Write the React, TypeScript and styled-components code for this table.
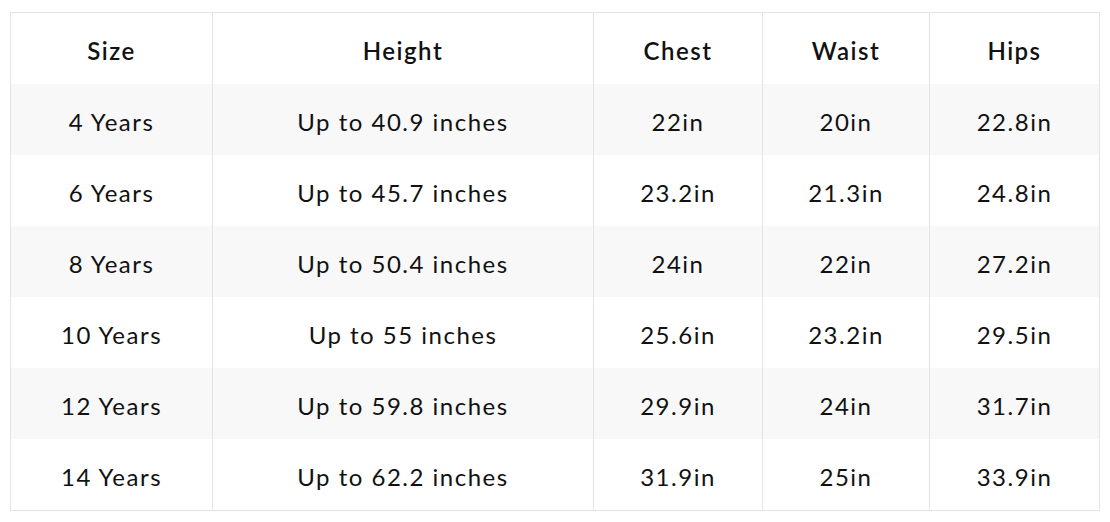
import React from "react";
import styled, { createGlobalStyle } from "styled-components";

const Global = createGlobalStyle`
  html, body { margin: 0; padding: 0; background: #ffffff; }
  body { font-family: "Lato", "Noto Sans", sans-serif; color: #111; }
`;

const Page = styled.div`
  padding: 12px 11px 12px 10px;
`;

const Table = styled.table`
  width: 1089px;
  border-collapse: collapse;
  border: 1px solid #e4e4e4;
  table-layout: fixed;
`;

const Th = styled.th`
  height: 68px;
  padding: 3px 0 0;
  font-size: 24px;
  font-weight: 600;
  letter-spacing: 1.5px;
  text-align: center;
  border-left: 1px solid #e4e4e4;
  color: #111;
`;

const Row = styled.tr<{ $shaded: boolean }>`
  background: ${(p) => (p.$shaded ? "#f8f8f8" : "#ffffff")};
`;

const Td = styled.td`
  height: 68px;
  padding: 3px 0 0;
  font-size: 24px;
  font-weight: 400;
  letter-spacing: 1.5px;
  text-align: center;
  border-left: 1px solid #e4e4e4;
  color: #111;
`;

const widths = [202, 381, 169, 167, 170];
const headers = ["Size", "Height", "Chest", "Waist", "Hips"];
const rows = [
  ["4 Years", "Up to 40.9 inches", "22in", "20in", "22.8in"],
  ["6 Years", "Up to 45.7 inches", "23.2in", "21.3in", "24.8in"],
  ["8 Years", "Up to 50.4 inches", "24in", "22in", "27.2in"],
  ["10 Years", "Up to 55 inches", "25.6in", "23.2in", "29.5in"],
  ["12 Years", "Up to 59.8 inches", "29.9in", "24in", "31.7in"],
  ["14 Years", "Up to 62.2 inches", "31.9in", "25in", "33.9in"],
];

export default function App() {
  return (
    <Page>
      <Global />
      <Table>
        <colgroup>
          {widths.map((w, i) => (
            <col key={i} style={{ width: w }} />
          ))}
        </colgroup>
        <thead>
          <tr>
            {headers.map((h) => (
              <Th key={h}>{h}</Th>
            ))}
          </tr>
        </thead>
        <tbody>
          {rows.map((r, i) => (
            <Row key={i} $shaded={i % 2 === 0}>
              {r.map((c, j) => (
                <Td key={j}>{c}</Td>
              ))}
            </Row>
          ))}
        </tbody>
      </Table>
    </Page>
  );
}
